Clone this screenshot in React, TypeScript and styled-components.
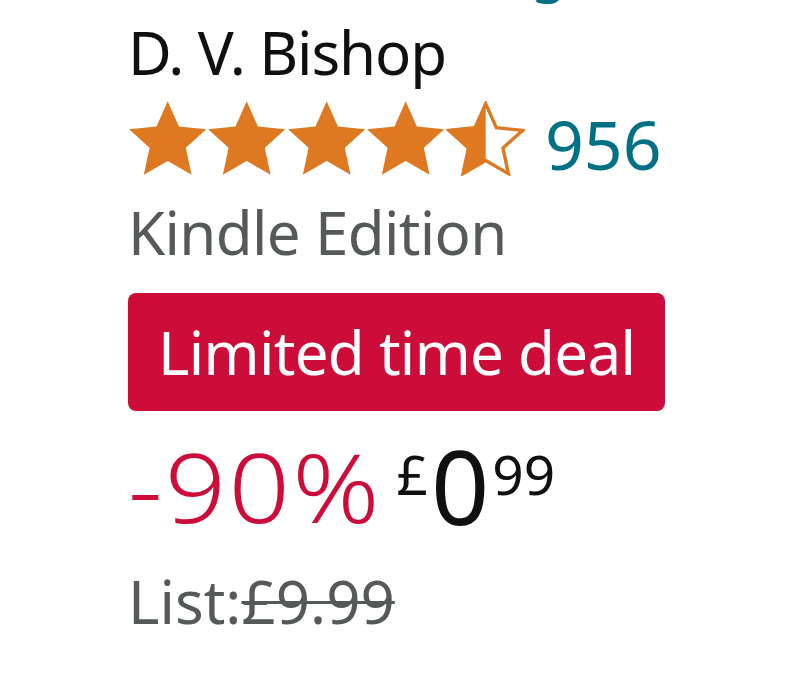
import React from 'react'
import styled, { createGlobalStyle } from 'styled-components'

const GlobalStyle = createGlobalStyle`
  html, body {
    margin: 0;
    padding: 0;
    background: #fff;
  }
  body {
    font-family: "Noto Sans", "Open Sans", Arial, sans-serif;
    color: #0f1111;
    overflow: hidden;
  }
`

const STAR_R = 40.9
const starPoints = (R: number, cx: number, cy: number) => {
  const r = R * 0.47
  const pts: string[] = []
  for (let k = 0; k < 10; k++) {
    const a = ((-90 + 36 * k) * Math.PI) / 180
    const rad = k % 2 === 0 ? R : r
    pts.push(`${(cx + rad * Math.cos(a)).toFixed(2)},${(cy + rad * Math.sin(a)).toFixed(2)}`)
  }
  return pts.join(' ')
}

const Star = ({ half }: { half?: boolean }) => {
  const full = starPoints(STAR_R, 40, STAR_R)
  if (!half) {
    return (
      <StarSvg viewBox="0 0 80 75">
        <polygon points={full} fill="#de7921" />
      </StarSvg>
    )
  }
  const inner = starPoints(STAR_R - 2, 40, STAR_R + 0.5)
  return (
    <StarSvg viewBox="0 0 80 75">
      <defs>
        <clipPath id="leftHalf">
          <rect x="0" y="0" width="40" height="75" />
        </clipPath>
      </defs>
      <polygon points={inner} fill="#fff" stroke="#de7921" strokeWidth="3.4" strokeLinejoin="miter" />
      <polygon points={full} fill="#de7921" clipPath="url(#leftHalf)" />
    </StarSvg>
  )
}

const App = () => {
  return (
    <>
      <GlobalStyle />
      <Card>
        <Title>Darkness Falling</Title>
        <Author>D. V. Bishop</Author>
        <Rating>
          <Stars>
            <Star />
            <Star />
            <Star />
            <Star />
            <Star half />
          </Stars>
          <Count>956</Count>
        </Rating>
        <Format>Kindle Edition</Format>
        <Deal>Limited time deal</Deal>
        <PriceRow>
          <Discount>-90%</Discount>
          <Price>
            <Sup>£</Sup>
            <Whole>0</Whole>
            <Sup>99</Sup>
          </Price>
        </PriceRow>
        <ListPrice>
          List:<s>£9.99</s>
        </ListPrice>
      </Card>
    </>
  )
}

export default App

const Card = styled.div`
  width: 100%;
  height: 690px;
  padding-left: 128px;
  box-sizing: border-box;
  display: flex;
  flex-direction: column;
  align-items: flex-start;
  overflow: hidden;
`

const Title = styled.div`
  font-size: 60px;
  line-height: 72px;
  font-weight: 450;
  letter-spacing: -1.6px;
  color: #007185;
  white-space: nowrap;
  margin-top: -69px;
`

const Author = styled.div`
  font-size: 60px;
  line-height: 72px;
  font-weight: 450;
  letter-spacing: -1.1px;
  color: #0f1111;
  margin-top: 13px;
`

const Rating = styled.div`
  display: flex;
  align-items: flex-start;
  margin-top: 13px;
`

const Stars = styled.div`
  display: flex;
`

const StarSvg = styled.svg`
  width: 79.4px;
  height: 75px;
  display: block;
`

const Count = styled.span`
  font-size: 68px;
  line-height: 68px;
  font-weight: 450;
  color: #007185;
  margin-left: 20px;
  margin-top: 9px;
`

const Format = styled.div`
  font-size: 60px;
  line-height: 72px;
  font-weight: 450;
  letter-spacing: -0.65px;
  color: #565959;
  margin-top: 18px;
`

const Deal = styled.div`
  margin-top: 25px;
  padding: 23px 30px;
  background: #cc0c39;
  border-radius: 8px;
  color: #fff;
  font-size: 60px;
  line-height: 72px;
  font-weight: 450;
  letter-spacing: -0.7px;
  white-space: nowrap;
`

const PriceRow = styled.div`
  display: flex;
  align-items: flex-start;
  margin-top: 24px;
`

const Discount = styled.span`
  display: inline-block;
  font-size: 96px;
  line-height: 96px;
  font-weight: 320;
  letter-spacing: 2px;
  color: #cc0c39;
  transform: scaleX(1.12);
  transform-origin: left center;
  margin-top: 3px;
  margin-right: 42px;
`

const Price = styled.span`
  display: flex;
  align-items: flex-start;
  color: #0f1111;
  font-weight: 450;
`

const Sup = styled.span`
  font-size: 55px;
  line-height: 55px;
  margin-top: 11px;
`

const Whole = styled.span`
  font-size: 102px;
  line-height: 102px;
  font-weight: 400;
  margin: 0 3px;
`

const ListPrice = styled.div`
  font-size: 60px;
  line-height: 72px;
  font-weight: 450;
  color: #565959;
  margin-top: 28px;

  s {
    text-decoration-thickness: 3px;
  }
`
